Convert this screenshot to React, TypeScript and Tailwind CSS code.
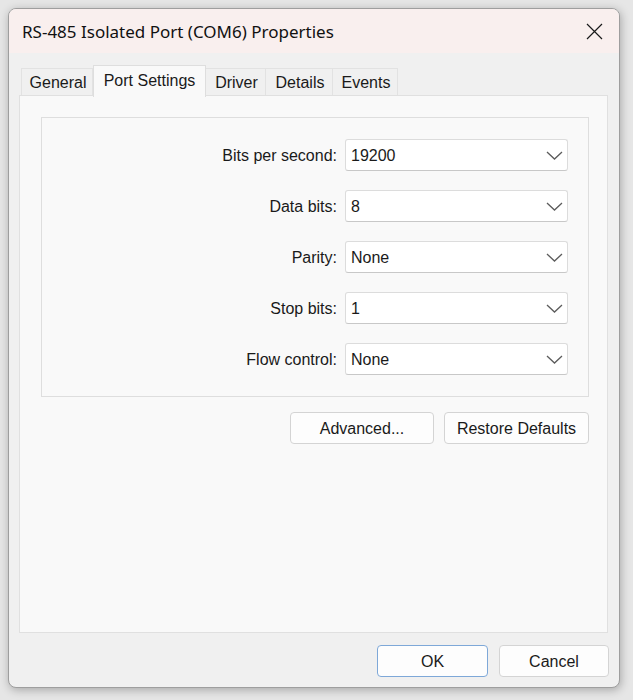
import React from "react";

const tabs = [
  { label: "General", w: "w-[72px]" },
  { label: "Port Settings", w: "w-[113px]", active: true },
  { label: "Driver", w: "w-[60px]" },
  { label: "Details", w: "w-[67px]" },
  { label: "Events", w: "w-[65px]" },
];

const fields = [
  { label: "Bits per second:", value: "19200" },
  { label: "Data bits:", value: "8" },
  { label: "Parity:", value: "None" },
  { label: "Stop bits:", value: "1" },
  { label: "Flow control:", value: "None" },
];

const Chevron = () => (
  <svg width="17" height="9" viewBox="0 0 17 9" fill="none" className="shrink-0">
    <path d="M1 1l7.5 7L16 1" stroke="#5c5c5c" strokeWidth="1.3" />
  </svg>
);

const Combo = ({ value }: { value: string }) => (
  <div className="flex h-[32px] w-[223px] items-center justify-between rounded-[3px] border border-[#dcdcdc] border-b-[#c8c8c8] bg-white pl-[5px] pr-[4px]">
    <span className="pt-[2px]">{value}</span>
    <Chevron />
  </div>
);

const Button = ({ children, className }: { children: React.ReactNode; className?: string }) => (
  <button
    className={
      "flex h-[32px] items-center justify-center rounded-[4px] border bg-[#fdfdfd] pt-[2px] text-[16px] text-[#1a1a1a] " +
      (className ?? "")
    }
  >
    {children}
  </button>
);

export default function App() {
  return (
    <div className="h-[700px] w-[633px] bg-[#e6e6e6] pl-[8px] pt-[8px] font-['Liberation_Sans',Arial,sans-serif] text-[16px] text-[#1a1a1a]">
      <div className="flex h-[680px] w-[612px] flex-col overflow-hidden rounded-[8px] border border-[#9e9e9e] bg-[#f0f0f0] shadow-[1px_2px_10px_rgba(0,0,0,0.28)]">
        {/* title bar */}
        <div className="flex h-[44px] shrink-0 items-center justify-between bg-[#f9efee] pl-[13px] pr-[16px]">
          <span className="pt-[1px] font-['Noto_Sans',sans-serif] text-[17px] text-[#111]">
            RS-485 Isolated Port (COM6) Properties
          </span>
          <svg width="17" height="17" viewBox="0 0 17 17" className="mt-[1px]">
            <path d="M1 1l15 15M16 1L1 16" stroke="#1a1a1a" strokeWidth="1.2" />
          </svg>
        </div>

        <div className="flex flex-col pl-[10px] pr-[11px] pt-[12px]">
          {/* tab strip */}
          <div className="flex h-[30px] items-end pl-[2px]">
            {tabs.map((t) =>
              t.active ? (
                <div
                  key={t.label}
                  className={`${t.w} relative z-10 -mb-[2px] flex h-[32px] items-start justify-center border border-b-0 border-[#dedede] bg-[#f9f9f9] pt-[3px]`}
                >
                  {t.label}
                </div>
              ) : (
                <div
                  key={t.label}
                  className={`${t.w} flex h-[27px] items-center justify-center border border-b-0 border-l-0 border-[#e2e2e2] bg-[#f0f0f0] pl-[2px] pt-[1px] first:border-l`}
                >
                  {t.label}
                </div>
              ),
            )}
          </div>

          {/* tab panel */}
          <div className="flex h-[538px] flex-col border border-[#e0e0e0] bg-[#f9f9f9] pl-[21px] pr-[18px] pt-[21px]">
            <div className="flex flex-col gap-[19px] border border-[#dedede] py-[21px] pr-[20px]">
              {fields.map((f) => (
                <div key={f.label} className="flex items-center justify-end gap-[8px]">
                  <span className="pt-[2px]">{f.label}</span>
                  <Combo value={f.value} />
                </div>
              ))}
            </div>
            <div className="mt-[15px] flex justify-end gap-[10px]">
              <Button className="w-[144px] border-[#d4d4d4]">Advanced...</Button>
              <Button className="w-[145px] border-[#d4d4d4]">Restore Defaults</Button>
            </div>
          </div>

          {/* dialog buttons */}
          <div className="-mr-[1px] mt-[12px] flex justify-end gap-[11px]">
            <Button className="w-[111px] border-[#7ea8d8]">OK</Button>
            <Button className="w-[110px] border-[#d4d4d4]">Cancel</Button>
          </div>
        </div>
      </div>
    </div>
  );
}
